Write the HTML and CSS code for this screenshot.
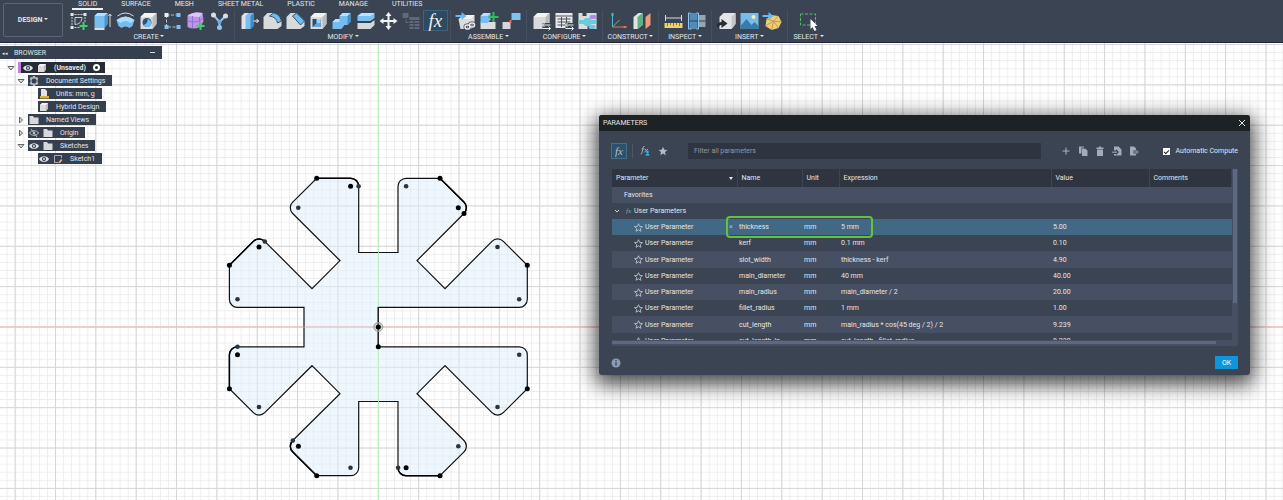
FILE: index.html
```html
<!DOCTYPE html>
<html lang="en">
<head>
<meta charset="utf-8">
<title>Design workspace</title>
<link rel="stylesheet" href="styles.css">
</head>
<body>
<svg class="defs" aria-hidden="true">
  <symbol id="cube" viewBox="0 0 20 20"><path d="M2 6 6 2h12v11l-4 5H2z" fill="#d9dadb"/><path d="M2 6 6 2h12l-4 4z" fill="#f4f4f4"/><path d="M14 6l4-4v11l-4 5z" fill="#b9bbbd"/></symbol>
  <symbol id="eye" viewBox="0 0 10 8"><path d="M0 4C2 .2 8 .2 10 4 8 7.8 2 7.8 0 4z" fill="#dfe3e8"/><circle cx="5" cy="4" r="2.100" fill="#343d4b"/><circle cx="5" cy="4" r="1" fill="#dfe3e8"/></symbol>
  <symbol id="folder" viewBox="0 0 10 8"><path d="M.5 0H4l1 1.500h4.500V8h-9z" fill="#d5d9dd"/></symbol>
  <symbol id="down" viewBox="0 0 8 8"><path d="M1 2.500h6L4 6z" fill="#ddd" stroke="#666" stroke-width="1"/></symbol>
  <symbol id="right" viewBox="0 0 8 8"><path d="M2.500 1l3 3-3 3z" fill="#ddd" stroke="#666" stroke-width="1"/></symbol>
  <symbol id="star" viewBox="0 0 10 10"><path d="M5 .8l1.250 2.900 3.150.3-2.400 2.100.7 3.100L5 7.600 2.300 9.200 3 6.100.6 4l3.150-.3z"/></symbol>
</svg>

<header class="toolbar">
  <button class="workspace" type="button">DESIGN <span class="caret"></span></button>
  <div class="ribbon">
    <nav class="tabs">
      <button class="tab active" type="button">SOLID</button>
      <button class="tab" type="button">SURFACE</button>
      <button class="tab" type="button">MESH</button>
      <button class="tab" type="button">SHEET METAL</button>
      <button class="tab" type="button">PLASTIC</button>
      <button class="tab" type="button">MANAGE</button>
      <button class="tab" type="button">UTILITIES</button>
    </nav>
    <div class="groups">
      <section class="group create">
        <div class="tools">
          <button class="tool" type="button" aria-label="Create sketch"><svg viewBox="0 0 20 20"><g fill="none" stroke="#c9cdd2"><path d="M3 3.500h14M3.500 3v14M3 16.500h8M16.500 3v9" stroke-dasharray="2 1"/><path d="M6.500 13.500v-7h7c0 4-3 7-7 7z"/></g><path d="M2 2h3v3H2zM15 2h3v3h-3zM2 15h3v3H2z" fill="#e3e5e7"/><path d="M14 11h2v3h3v2h-3v3h-2v-3h-3v-2h3z" fill="#44cc6e"/></svg></button>
          <button class="tool" type="button" aria-label="Extrude"><svg viewBox="0 0 20 20"><path d="M2 5l3-3h10v11l-3 4H2z" fill="#79bef0"/><path d="M2 5l3-3h10l-3 3z" fill="#b5dffc"/><path d="M12 5l3-3v11l-3 4z" fill="#4795cf"/><path d="M2 17h10v2H2z" fill="#ddd"/><path d="M17.500 4v12M16 5l1.500-2L19 5" stroke="#ddd" fill="none"/></svg></button>
          <button class="tool" type="button" aria-label="Revolve"><svg viewBox="0 0 20 20"><path d="M1 9q9-7 18 0l-2 6-3 2q-4-3-8 0l-3-2z" fill="#74bbef"/><path d="M1 9q9-7 18 0l-4 3q-5-4-10 0z" fill="#b0dcfb"/><path d="M2 5q8-6 16 0" fill="none" stroke="#ddd"/></svg></button>
          <button class="tool" type="button" aria-label="Hole"><svg viewBox="0 0 20 20"><use href="#cube"/><circle cx="8.500" cy="11.500" r="4.500" fill="#2e5474"/><path d="M5 14a4.500 4.500 0 008-1 4.500 4.500 0 00-4-5 5 5 0 01-4 6z" fill="#72baf0"/></svg></button>
          <button class="tool" type="button" aria-label="Rectangular pattern"><svg viewBox="0 0 20 20"><path d="M4 4h12M4 4v12h12" fill="none" stroke="#b9bec5" stroke-dasharray="3 1.500"/><path d="M2 2h4v4H2z" fill="#eee"/><path d="M14 2h4v4h-4zM2 14h4v4H2zM14 14h4v4h-4z" fill="#7cc2f4"/></svg></button>
          <button class="tool" type="button" aria-label="Create form"><svg viewBox="0 0 20 20"><path d="M2 5q5-5 15-3l1 8-3 6q-7 3-13 0z" fill="#bd94ea"/><path d="M2 5q5-5 15-3l-3 4z" fill="#dfc6f8"/><path d="M7 5v12M2 10q7 2 12 0l4-3M14 6v10" fill="none" stroke="#976fce"/><path d="M14 11h2v3h3v2h-3v3h-2v-3h-3v-2h3z" fill="#44cc6e"/></svg></button>
          <button class="tool" type="button" aria-label="Derive"><svg viewBox="0 0 20 20"><path d="M4 4l6 7 6-6M10 11v5" fill="none" stroke="#8bc9f5" stroke-width="2"/><circle cx="4" cy="4" r="2.500" fill="#ddd"/><circle cx="16" cy="5" r="2.500" fill="#ddd"/><circle cx="10" cy="11" r="2" fill="#6aaee0"/><circle cx="10" cy="16.500" r="2.500" fill="#8bc9f5"/></svg></button>
        </div>
        <button class="group-label" type="button">CREATE <span class="caret"></span></button>
      </section>
      <section class="group modify">
        <div class="tools">
          <button class="tool" type="button" aria-label="Press pull"><svg viewBox="0 0 20 20"><path d="M2 5l3-3h4v13l-3 3H2z" fill="#e1e2e3"/><path d="M6 5l3-3h5v13l-3 3H6z" fill="#77bff2"/><path d="M11 5l3-3v13l-3 3z" fill="#408ac3"/><path d="M14 10h5M17 8l2 2-2 2" stroke="#fff" fill="none"/></svg></button>
          <button class="tool" type="button" aria-label="Fillet"><svg viewBox="0 0 20 20"><path d="M1 6l4-4h6q6 1 8 8v5l-4 3H1z" fill="#d9dadb"/><path d="M7 5l4-3q6 1 8 8l-4 2q-1-6-8-7z" fill="#74bcef" stroke="#34536d"/></svg></button>
          <button class="tool" type="button" aria-label="Chamfer"><svg viewBox="0 0 20 20"><path d="M1 6l4-4h6l8 8v5l-4 3H1z" fill="#d9dadb"/><path d="M7 5l4-3 8 8-4 4z" fill="#74bcef" stroke="#34536d"/></svg></button>
          <button class="tool" type="button" aria-label="Shell"><svg viewBox="0 0 20 20"><use href="#cube"/><path d="M4 8h8v8H4z" fill="#294e70"/><path d="M8 8h4v4H8z" fill="#9bd2fa"/><path d="M4 16l4-4h4v4z" fill="#5da8de"/></svg></button>
          <button class="tool" type="button" aria-label="Combine"><svg viewBox="0 0 20 20"><path d="M8 5l3-3h8v9l-3 3h-3l-3 4H1v-7l3-3h4z" fill="#74bcef"/><path d="M8 5l3-3h8l-3 3zM1 11l3-3h4v3z" fill="#b7e0fc"/><path d="M16 5l3-3v9l-3 3z" fill="#438fc9"/></svg></button>
          <button class="tool" type="button" aria-label="Offset face"><svg viewBox="0 0 20 20"><path d="M2 5l4-3h13v5l-4 3H2z" fill="#78c0f4"/><path d="M2 5l4-3h13l-4 3z" fill="#bae1fd"/><path d="M2 12h13l4-3v5l-4 4H2z" fill="#d5d7d9"/><path d="M1 11h14l4-3" fill="none" stroke="#25425b"/></svg></button>
          <button class="tool" type="button" aria-label="Move"><svg viewBox="0 0 20 20"><path d="M10 1l3 4h-2v4h4V7l4 3-4 3v-2h-4v4h2l-3 4-3-4h2v-4H5v2l-4-3 4-3v2h4V5H7z" fill="#f2f3f4"/></svg></button>
          <button class="tool" type="button" aria-label="Align" disabled><svg viewBox="0 0 20 20"><path d="M1 2h6v5H1zM8 6h10v3H8zM8 10h4v2H8zM13 10h5v2h-5zM8 13h4v2H8zM13 13h5v2h-5zM8 16h4v2H8zM13 16h5v2h-5zM4 8h1v3h2v1H4z" fill="#5f6979"/></svg></button>
          <button class="tool selected" type="button" aria-label="Change parameters"><i class="fx">fx</i></button>
        </div>
        <button class="group-label" type="button">MODIFY <span class="caret"></span></button>
      </section>
      <section class="group triple">
        <div class="tools">
          <button class="tool" type="button" aria-label="Insert component"><svg viewBox="0 0 20 20"><path d="M3 8l5-4h11v10l-3 4H5z" fill="#dcddde"/><path d="M5 8l3-4h11l-4 4z" fill="#f4f4f4"/><path d="M0 4h6V1l5 4-5 4V6H0z" fill="#67b9f4"/><g fill="none" stroke="#3b4453" stroke-width="3"><rect x="9.500" y="14" width="5" height="4" rx="2"/><rect x="14" y="12" width="5" height="4" rx="2"/></g><g fill="none" stroke="#f0f0f0" stroke-width="1.500"><rect x="9.500" y="14" width="5" height="4" rx="2"/><rect x="14" y="12" width="5" height="4" rx="2"/></g></svg></button>
          <button class="tool" type="button" aria-label="New component"><svg viewBox="0 0 20 20"><path d="M2 11h7v7H2zM9 11h8v7H9z" fill="#dbdcdd"/><path d="M2 5l3-3h7v7l-3 3H2z" fill="#77bff3"/><path d="M2 5l3-3h7L9 5z" fill="#b7e0fc"/><path d="M14 1h2v4h4v2h-4v4h-2V7h-4V5h4z" fill="#31bd5b"/></svg></button>
          <button class="tool" type="button" aria-label="Joint"><svg viewBox="0 0 20 20"><path d="M10 2h9v7h-9z" fill="#7fc3f5"/><path d="M1 11h8v7H1z" fill="#d6d7d8"/><path d="M10 10H9v2" stroke="#e37053" stroke-width="2"/></svg></button>
        </div>
        <button class="group-label" type="button">ASSEMBLE <span class="caret"></span></button>
      </section>
      <section class="group triple">
        <div class="tools">
          <button class="tool" type="button" aria-label="Create configuration"><svg viewBox="0 0 20 20"><use href="#cube"/><path d="M11 12h9v8h-9z" fill="#3b4453"/><path d="M11 14h8M11 17.500h8M13 12l-2 2 2 2M17 15.500l2 2-2 2" fill="none" stroke="#eceef0"/></svg></button>
          <button class="tool" type="button" aria-label="Configuration table"><svg viewBox="0 0 20 20"><path d="M1 2h17v15H1z" fill="#e8e9ea"/><path d="M1 5h17M3 8h13M3 11h13M3 14h9M7 6v10M12 6v10" stroke="#4e555d"/><path d="M11 12h9v8h-9z" fill="#3b4453"/><path d="M11 14h8M11 17.500h8M13 12l-2 2 2 2M17 15.500l2 2-2 2" fill="none" stroke="#eceef0"/></svg></button>
          <button class="tool" type="button" aria-label="Theme table"><svg viewBox="0 0 20 20"><path d="M1 2h4v3h4V2h10v16h-4v-3h-5v3H1z" fill="#dadde0"/><path d="M1 9h5c2-3 7-3 8 0h5v4h-5c-2 3-6 3-8 0H1z" fill="#66cdda"/><rect x="12" y="4" width="7" height="4" rx="2" fill="#ae8be0"/><rect x="11" y="14" width="7" height="4" rx="2" fill="#79bef0"/></svg></button>
        </div>
        <button class="group-label" type="button">CONFIGURE <span class="caret"></span></button>
      </section>
      <section class="group double">
        <div class="tools">
          <button class="tool" type="button" aria-label="Construct axis"><svg viewBox="0 0 20 20"><path d="M4 3v13" stroke="#55b6d3"/><path d="M4 16h13" stroke="#e17161"/><path d="M4 16l7-7" stroke="#57c676"/><path d="M3 2h2v3H3z" fill="#55b6d3"/><path d="M15 15h3v2h-3z" fill="#e17161"/></svg></button>
          <button class="tool" type="button" aria-label="Offset plane"><svg viewBox="0 0 20 20"><path d="M1 6l5-4h4v12l-5 4H1z" fill="#e2e3e3"/><path d="M5 6l5-4v12l-5 4z" fill="#55b77e"/><path d="M13 6l5-4v12l-5 4z" fill="#f19b75"/></svg></button>
        </div>
        <button class="group-label" type="button">CONSTRUCT <span class="caret"></span></button>
      </section>
      <section class="group double narrow">
        <div class="tools">
          <button class="tool" type="button" aria-label="Measure"><svg viewBox="0 0 20 20"><path d="M2 4v6M18 4v6M2 7h16" stroke="#d7dade"/><path d="M1 12h18v5H1z" fill="#efcf68"/><path d="M4 12v3M7 12v2M10 12v3M13 12v2M16 12v3" stroke="#8b7a45"/></svg></button>
          <button class="tool" type="button" aria-label="Interference"><svg viewBox="0 0 20 20"><path d="M3 2h8v16H3z" fill="#548bb6"/><path d="M12 4h7v12h-7z" fill="#9ca3ad"/><path d="M3 10h16" stroke="#2d4459"/><path d="M4 2H2v16h3M10 2h2v16h-2" fill="none" stroke="#8cc8ef"/></svg></button>
        </div>
        <button class="group-label" type="button">INSPECT <span class="caret"></span></button>
      </section>
      <section class="group triple">
        <div class="tools">
          <button class="tool" type="button" aria-label="Insert derive"><svg viewBox="0 0 20 20"><path d="M3 6l4-4h12v11l-4 5H3z" fill="#e3e4e5"/><path d="M15 6l4-4v11l-4 5z" fill="#c3c5c7"/><path d="M0 15q1-4 5-4V8l6 4.500-6 4.500v-3q-3 0-3 3z" fill="#2b2e31"/></svg></button>
          <button class="tool" type="button" aria-label="Canvas"><svg viewBox="0 0 20 20"><path d="M1 2h18v16H1z" fill="#79bcea"/><path d="M1 15l6-7 5 6 3-3 4 4v3H1z" fill="#397ba9"/><circle cx="14" cy="6" r="2" fill="#f3efbb"/></svg></button>
          <button class="tool" type="button" aria-label="Insert mesh"><svg viewBox="0 0 20 20"><path d="M4 8l5-4 7 1 3 6-3 6-7 2-6-4z" fill="#edcd78"/><path d="M4 8l7 2 5-5M11 10l-2 9M11 10l8 1M3 15l8-5 5 7" fill="none" stroke="#c49c48"/><path d="M0 4h6V1l5 4-5 4V6H0z" fill="#67b9f4"/></svg></button>
        </div>
        <button class="group-label" type="button">INSERT <span class="caret"></span></button>
      </section>
      <section class="group single">
        <div class="tools">
          <button class="tool" type="button" aria-label="Select"><svg viewBox="0 0 20 20"><path d="M2 3h15v11H2z" fill="none" stroke="#59b77a" stroke-dasharray="3 1.500"/><path d="M12 8l7 7h-3l2 4-2 1-2-4-2 2z" fill="#fff"/></svg></button>
        </div>
        <button class="group-label" type="button">SELECT <span class="caret"></span></button>
      </section>
    </div>
  </div>
</header>

<main class="workspace-area">
  <svg class="sketch" role="img" aria-label="Sketch">
    <defs>
      <pattern id="minor" x="374.300" y="279.900" width="8.070" height="8.070" patternUnits="userSpaceOnUse"><path d="M0 4H8.070M4 0V8.070" stroke="#ededed" stroke-width="1"/></pattern>
      <pattern id="major" x="358.100" y="263.800" width="40.350" height="40.350" patternUnits="userSpaceOnUse"><path d="M0 20.200H40.350M20.200 0V40.350" stroke="#d6d6d6" stroke-width="1"/></pattern>
    </defs>
    <rect width="100%" height="100%" fill="#fff"/>
    <rect width="100%" height="100%" fill="url(#minor)"/>
    <rect width="100%" height="100%" fill="url(#major)"/>
    <g transform="translate(0 -43)">
      <path fill="#def0fc" fill-opacity=".5" stroke="#111" stroke-width="1.200" d="M358.700 252.500V186.300A8 8 0 0 0 350.700 178.300H316.700L292.700 202.100A8 8 0 0 0 292.700 213.500L340 260.600 312 288.600 264.700 241.300A8 8 0 0 0 253.400 241.300L229.400 265.300V299.300A8 8 0 0 0 237.400 307.300H304V346.800H237.400A8 8 0 0 0 229.400 354.800V388.700L253.400 412.700A8 8 0 0 0 264.700 412.700L312 365.700 340 393.700 292.700 440.500A8 8 0 0 0 292.700 451.900L316.700 475.700H350.700A8 8 0 0 0 358.700 467.700V401.500H398V467.700A8 8 0 0 0 406 475.700H440L464 451.900A8 8 0 0 0 464 440.500L417 393.700 445 365.700 492 412.700A8 8 0 0 0 503.300 412.700L527.300 388.700V354.800A8 8 0 0 0 519.300 346.800H378.300V307.300H519.300A8 8 0 0 0 527.300 299.300V265.300L503.300 241.300A8 8 0 0 0 492 241.300L445 288.600 417 260.600 464 213.500A8 8 0 0 0 464 202.100L440 178.300H406A8 8 0 0 0 398 186.300V252.500Z"/>
      <path fill="none" stroke="#000" stroke-width="1.500" d="M316.700 178.300H350.700A8 8 0 0 1 358.700 186.300M440 178.300 464 202.100A8 8 0 0 1 464 213.500M229.400 265.300 253.400 241.300A8 8 0 0 1 264.700 241.300M229.400 388.700V354.800A8 8 0 0 1 237.400 346.800M316.700 475.700 292.700 451.900A8 8 0 0 1 292.700 440.500M440 475.700H406A8 8 0 0 1 398 467.700"/>
      <g fill="#2c3439">
        <circle cx="358.600" cy="186.200" r="2.300"/><circle cx="298.300" cy="207.800" r="2.300"/><circle cx="406.100" cy="186.200" r="2.300"/><circle cx="497.500" cy="247" r="2.300"/><circle cx="519.200" cy="299.300" r="2.300"/><circle cx="237.500" cy="299.300" r="2.300"/><circle cx="264.800" cy="241.500" r="2.300"/><circle cx="237.500" cy="346.800" r="2.300"/><circle cx="519.200" cy="354.800" r="2.300"/><circle cx="259" cy="407" r="2.300"/><circle cx="497.500" cy="407" r="2.300"/><circle cx="292.800" cy="440.600" r="2.300"/><circle cx="458.300" cy="446.200" r="2.300"/><circle cx="350.500" cy="467.800" r="2.300"/><circle cx="398.100" cy="467.800" r="2.300"/>
      </g>
    </g>
    <path d="M378.500 0V2000" stroke="#b4f0b4" stroke-opacity=".8"/>
    <path d="M0 284H4000" stroke="#f6a9a9" stroke-opacity=".8"/>
    <g transform="translate(0 -43)">
      <path d="M378.300 307V347" stroke="#111" stroke-width="1.200"/>
      <circle cx="378.300" cy="327" r="4.500" fill="#aaa" fill-opacity=".45" stroke="#999"/>
      <circle cx="316.700" cy="178.300" r="2.500"/><circle cx="440" cy="178.300" r="2.500"/><circle cx="350.600" cy="186.200" r="2.500"/><circle cx="458.300" cy="207.800" r="2.500"/><circle cx="464" cy="213.500" r="2.500"/><circle cx="259" cy="247" r="2.500"/><circle cx="229.400" cy="265.300" r="2.500"/><circle cx="527.300" cy="265.300" r="2.500"/><circle cx="378.300" cy="327" r="2.500"/><circle cx="378.300" cy="346.800" r="2.500"/><circle cx="237.500" cy="354.800" r="2.500"/><circle cx="229.400" cy="388.700" r="2.500"/><circle cx="527.300" cy="388.700" r="2.500"/><circle cx="298.400" cy="446.200" r="2.500"/><circle cx="406.100" cy="467.800" r="2.500"/><circle cx="316.700" cy="475.800" r="2.500"/><circle cx="440" cy="475.800" r="2.500"/>
    </g>
  </svg>

  <aside class="browser">
    <div class="browser-head"><span class="collapse">◂◂</span><span class="browser-title">BROWSER</span><span class="minimize"></span></div>
    <ul class="tree">
      <li class="root"><svg class="twist"><use href="#down"/></svg><div class="node"><svg class="ico"><use href="#eye"/></svg><svg class="ico big"><use href="#cube"/></svg><span>(Unsaved)</span><span class="radio"></span></div></li>
      <li class="l1"><svg class="twist"><use href="#down"/></svg><div class="node"><svg class="ico big" viewBox="0 0 10 10"><path d="M4 0h2l.4 1.500L8 1l1.300 1.700L8.500 4v2l.8 1.300L8 9l-1.600-.5L6 10H4l-.4-1.500L2 9 .7 7.300 1.500 6V4L.7 2.700 2 1l1.600.5z" fill="#b3bac3"/><circle cx="5" cy="5" r="2.500" fill="#363f4e"/></svg><span>Document Settings</span></div></li>
      <li class="l2"><div class="node"><svg class="ico big" viewBox="0 0 10 10"><path d="M2 0h4l2 2v5H2z" fill="#e2e4e6"/><path d="M1 7h9v2.500H1z" fill="#e1ad3b"/></svg><span>Units: mm, g</span></div></li>
      <li class="l2"><div class="node"><svg class="ico big"><use href="#cube"/></svg><span>Hybrid Design</span></div></li>
      <li class="l1"><svg class="twist"><use href="#right"/></svg><div class="node"><svg class="ico"><use href="#folder"/></svg><span>Named Views</span></div></li>
      <li class="l1"><svg class="twist"><use href="#right"/></svg><div class="node"><svg class="ico" viewBox="0 0 10 8"><path d="M.5 4C2 1 8 1 9.500 4 8 7 2 7 .5 4z" fill="none" stroke="#b9bfc7"/><circle cx="5" cy="4" r="1.300" fill="#b9bfc7"/><path d="M2 0l6 8" stroke="#b9bfc7"/></svg><svg class="ico"><use href="#folder"/></svg><span>Origin</span></div></li>
      <li class="l1"><svg class="twist"><use href="#down"/></svg><div class="node"><svg class="ico"><use href="#eye"/></svg><svg class="ico"><use href="#folder"/></svg><span>Sketches</span></div></li>
      <li class="l2"><div class="node"><svg class="ico"><use href="#eye"/></svg><svg class="ico big" viewBox="0 0 10 10"><path d="M1.500 9V1.500H9M1.500 8.500H5M8.500 2v2" fill="none" stroke="#9faab6"/><path d="M5 9l3-4 1.500 1L7 9z" fill="#e6b489"/></svg><span>Sketch1</span></div></li>
    </ul>
  </aside>

  <section class="dialog" role="dialog" aria-labelledby="dlg-title">
    <header class="dialog-title"><span id="dlg-title">PARAMETERS</span>
      <button class="close" type="button" aria-label="Close"><svg viewBox="0 0 8 8"><path d="M1 1l6 6M7 1L1 7" stroke="#e6e8ea" stroke-width="1"/></svg></button>
    </header>
    <div class="dialog-tools">
      <button class="mini fx-button" type="button" aria-label="All parameters"><i class="fx">fx</i></button>
      <span class="divider"></span>
      <button class="mini" type="button" aria-label="User parameters"><svg viewBox="0 0 10 10"><path d="M5 0Q3.200 0 3 2L2 7Q1.600 8 .5 8M1.500 3h3M5 3l3 3M8 3L4.500 6" fill="none" stroke="#a9b3c0" stroke-width=".9"/><circle cx="7.500" cy="6" r="1.300" fill="#42b2ea"/><path d="M5.500 9.500q0-2 2-2t2 2z" fill="#42b2ea"/></svg></button>
      <button class="mini solid" type="button" aria-label="Favorites"><svg><use href="#star"/></svg></button>
      <input class="filter" type="text" placeholder="Filter all parameters" aria-label="Filter all parameters">
      <div class="actions">
        <button class="mini" type="button" aria-label="Add"><svg viewBox="0 0 10 10"><path d="M5 1.500v7M1.500 5h7" stroke="#aab3be"/></svg></button>
        <button class="mini" type="button" aria-label="Copy"><svg viewBox="0 0 10 10"><path d="M1 .5h5v1H3.500v6H1z" fill="#a2abb7"/><path d="M4 2.500h3l2.500 2V10H4z" fill="#a2abb7"/></svg></button>
        <button class="mini" type="button" aria-label="Delete"><svg viewBox="0 0 10 10"><path d="M1.500 1.500H4V.5h2v1h2.500V3h-7zM2 3.500h6V10H2z" fill="#a2abb7"/></svg></button>
        <button class="mini" type="button" aria-label="Import"><svg viewBox="0 0 10 10"><path d="M2 .5h4.500l3 3V9.500H2V8h2v1L7 6 4 3v1.500H2z" fill="#a2abb7"/><path d="M0 6.200h5" stroke="#a2abb7"/></svg></button>
        <button class="mini" type="button" aria-label="Export"><svg viewBox="0 0 10 10"><path d="M1 .5h4l2 2v2H4.500v3H7v2H1z" fill="#a2abb7"/><path d="M5 6h4M7.500 4.500L9.200 6 7.500 7.500" fill="none" stroke="#a2abb7"/></svg></button>
      </div>
      <label class="auto"><input type="checkbox" checked>Automatic Compute</label>
    </div>

    <div class="grid-frame">
      <div class="grid-view">
        <table class="params">
          <colgroup><col class="c-param"><col class="c-name"><col class="c-unit"><col class="c-expr"><col class="c-value"><col></colgroup>
          <thead><tr><th class="sorted">Parameter</th><th>Name</th><th>Unit</th><th>Expression</th><th>Value</th><th>Comments</th></tr></thead>
          <tbody>
            <tr class="fav"><td colspan="6">Favorites</td></tr>
            <tr class="section"><td colspan="6"><div class="section-name"><svg class="chev" viewBox="0 0 6 6"><path d="M1 2l2 2 2-2" fill="none" stroke="#ccd2d9"/></svg><i class="fx">fx</i>User Parameters</div></td></tr>
            <tr class="current"><td><div class="user"><svg><use href="#star"/></svg>User Parameter</div></td><td><div class="marked">thickness<span class="highlight">×</span></div></td><td>mm</td><td>5 mm</td><td>5.00</td><td></td></tr>
            <tr><td><div class="user"><svg><use href="#star"/></svg>User Parameter</div></td><td>kerf</td><td>mm</td><td>0.1 mm</td><td>0.10</td><td></td></tr>
            <tr><td><div class="user"><svg><use href="#star"/></svg>User Parameter</div></td><td>slot_width</td><td>mm</td><td>thickness - kerf</td><td>4.90</td><td></td></tr>
            <tr><td><div class="user"><svg><use href="#star"/></svg>User Parameter</div></td><td>main_diameter</td><td>mm</td><td>40 mm</td><td>40.00</td><td></td></tr>
            <tr><td><div class="user"><svg><use href="#star"/></svg>User Parameter</div></td><td>main_radius</td><td>mm</td><td>main_diameter / 2</td><td>20.00</td><td></td></tr>
            <tr><td><div class="user"><svg><use href="#star"/></svg>User Parameter</div></td><td>fillet_radius</td><td>mm</td><td>1 mm</td><td>1.00</td><td></td></tr>
            <tr><td><div class="user"><svg><use href="#star"/></svg>User Parameter</div></td><td>cut_length</td><td>mm</td><td>main_radius * cos(45 deg / 2) / 2</td><td>9.239</td><td></td></tr>
            <tr><td><div class="user"><svg><use href="#star"/></svg>User Parameter</div></td><td>cut_length_in</td><td>mm</td><td>cut_length - fillet_radius</td><td>8.239</td><td></td></tr>
          </tbody>
        </table>
      </div>
      <div class="v-track"><div class="v-thumb"></div></div>
      <div class="h-track"><div class="h-thumb"></div></div>
    </div>

    <footer class="dialog-foot">
      <button class="info" type="button" aria-label="Information"><svg viewBox="0 0 10 10"><circle cx="5" cy="5" r="4.500" fill="#8b9cb3"/><path d="M5 2v1.300M5 4.300v3.500" stroke="#3b4453" stroke-width="1.300"/></svg></button>
      <button class="ok" type="button">OK</button>
    </footer>
  </section>
</main>
</body>
</html>
```
FILE: styles.css
```css
* { box-sizing: border-box; }
body {
  margin: 0;
  height: 100vh;
  display: flex;
  flex-direction: column;
  overflow: hidden;
  font: 7px/10px Roboto, "Noto Sans", sans-serif;
  color: #e3e7eb;
}
button {
  margin: 0;
  padding: 0;
  border: 0;
  background: none;
  color: inherit;
  font: inherit;
}
.defs { position: absolute; width: 0; height: 0; }
.caret {
  display: inline-block;
  border: 2px solid transparent;
  border-top-color: currentColor;
  border-bottom: 0;
  vertical-align: 2px;
}
.fx { font-family: "Liberation Serif", serif; font-style: italic; }

/* toolbar */
.toolbar {
  display: flex;
  flex: none;
  background: #3b4453;
  border-bottom: 1px solid #25253a;
}
.workspace {
  width: 60px;
  height: 34px;
  margin: 3px 4px 5px 3px;
  border: 1px solid #5a6577;
  border-radius: 2px;
  font-weight: 700;
}
.ribbon { flex: 1; }
.tabs {
  display: flex;
  gap: 24px;
  height: 10px;
  padding-left: 11px;
}
.tab { line-height: 8px; height: 10px; padding-bottom: 2px; }
.tab.active {
  margin: 0 -6px;
  padding: 0 6px;
  border-bottom: 2px solid #f0f1f2;
}
.groups { display: flex; }
.group {
  padding: 0 3px;
  display: flex;
  flex-direction: column;
  align-items: center;
}
.group + .group { border-left: 1px solid #465060; }
.create { width: 167px; padding: 0 3px 0 0; }
.modify { width: 216px; padding: 0 2px 0 3px; }
.triple { width: 76px; }
.double { width: 56px; }
.double.narrow { width: 53px; }
.single { width: 42px; }
.tools { display: flex; align-self: stretch; height: 21px; }
.tool {
  flex: 1 1 0;
  min-width: 0;
  display: flex;
  align-items: center;
  justify-content: center;
}
.tool svg { flex: none; width: 21px; height: 20px; }
.tool.selected { background: #2d4a61; border: 1px solid #3d6380; }
.tool .fx { font-size: 19px; line-height: 18px; color: #eef2f5; }
.group-label { height: 11px; line-height: 12px; white-space: nowrap; }

/* canvas */
.workspace-area { position: relative; flex: 1; overflow: hidden; }
.sketch { position: absolute; inset: 0; width: 100%; height: 100%; }

/* browser tree */
.browser { position: relative; width: 162px; padding-top: 3px; }
.browser-head {
  display: flex;
  align-items: center;
  height: 13px;
  padding: 0 7px 0 2px;
  background: #363f4e;
}
.collapse { width: 12px; font-size: 5px; }
.browser-title { flex: 1; }
.minimize { width: 5px; height: 1px; background: #d9dde2; }
.tree {
  list-style: none;
  margin: 0;
  padding: 2px 0 0;
}
.tree li { display: flex; align-items: center; height: 13px; }
.twist { width: 8px; height: 8px; margin-right: 3px; }
.root { padding-left: 7px; }
.l1 { padding-left: 17px; }
.l2 { padding-left: 38px; }
.node {
  display: flex;
  align-items: center;
  gap: 4px;
  height: 11px;
  padding: 0 7px 0 1px;
  background: #363f4e;
  white-space: nowrap;
}
.node span { margin-left: 3px; }
.ico { width: 10px; height: 8px; }
.ico.big { height: 10px; }
.root .node {
  padding: 0 5px 0 2px;
  border-left: 3px solid #c47fd6;
  background: #262c36;
  font-weight: 700;
}
.root .node .radio {
  width: 7px;
  height: 7px;
  border: 2px solid #fff;
  border-radius: 50%;
}

/* parameters window */
.dialog {
  position: absolute;
  left: 599px;
  right: 33px;
  top: 72px;
  background: #3b4453;
  border-radius: 3px;
  box-shadow: 0 6px 20px 4px rgba(0, 0, 0, .7);
}
.dialog-title {
  display: flex;
  align-items: center;
  justify-content: space-between;
  height: 16px;
  padding: 0 4px;
  border-radius: 3px 3px 0 0;
  background: #1d2224;
}
.close { width: 8px; height: 8px; display: flex; }
.dialog-tools {
  display: flex;
  align-items: center;
  padding: 12px 12px 10px;
}
.mini {
  width: 18px;
  height: 16px;
  display: flex;
  align-items: center;
  justify-content: center;
}
.mini svg { width: 10px; height: 10px; }
.mini.solid svg { fill: #b4bcc7; }
.fx-button { width: 16px; background: #2f506a; border: 1px solid #43708f; }
.fx-button .fx { font-size: 11px; line-height: 12px; color: #b5c3d0; }
.divider { width: 1px; height: 14px; margin: 0 3px 0 5px; background: #4c5666; }
.filter {
  flex: 1;
  min-width: 0;
  height: 16px;
  margin: 0 17px 0 16px;
  padding: 0 6px;
  border: 0;
  background: #2e3541;
  color: inherit;
  font: inherit;
}
.filter::placeholder { color: #9199a4; }
.actions { display: flex; margin-right: 20px; }
.actions .mini { width: 17px; }
.auto { display: flex; align-items: center; gap: 6px; white-space: nowrap; }
.auto input {
  appearance: none;
  width: 7px;
  height: 7px;
  margin: 0;
  background: #fff;
}
.auto input:checked::before {
  content: "";
  display: block;
  width: 4px;
  height: 2px;
  margin: 2px 1px;
  border: solid #222;
  border-width: 0 0 1px 1px;
  transform: rotate(-45deg);
}
.grid-frame {
  display: grid;
  grid-template-columns: 1fr 6px;
  grid-template-rows: 171px 6px;
  margin: 0 12px 0 13px;
  background: #465062;
}
.grid-view { overflow: hidden; }
.params {
  width: 100%;
  table-layout: fixed;
  border-collapse: collapse;
  background: #3b4453;
}
.c-param { width: 125px; }
.c-name { width: 65px; }
.c-unit { width: 37px; }
.c-expr { width: 212px; }
.c-value { width: 98px; }
.params th {
  position: relative;
  height: 18px;
  padding: 0 4px;
  background: #2e3541;
  border-right: 1px solid #3c4554;
  font-weight: 400;
  text-align: left;
}
.sorted::after {
  content: "";
  position: absolute;
  right: 4px;
  top: 8px;
  border: 2px solid transparent;
  border-top: 3px solid #e3e6ea;
  border-bottom: 0;
}
.params td { height: 16px; padding: 0 2px; white-space: nowrap; }
.params tr:nth-child(odd) { background: #465062; }
.params tr:nth-child(4n + 5) td { height: 17px; }
.params .fav td { padding-left: 12px; }
.params tr.current:nth-child(odd) { background: #416986; }
.user { display: flex; align-items: center; gap: 2px; padding-left: 20px; }
.user svg { width: 9px; height: 9px; fill: none; stroke: #b9c2cd; }
.section-name { display: flex; align-items: center; }
.chev { width: 6px; height: 6px; margin-right: 6px; }
.section-name .fx { width: 8px; color: #97a2b0; }
.marked { position: relative; }
.highlight {
  position: absolute;
  left: -13px;
  top: -6px;
  width: 147px;
  height: 22px;
  padding: 4px 1px;
  border: 2px solid #63c13f;
  border-radius: 4px;
  color: #a9bccb;
}
.v-track { padding: 0 1px; }
.v-thumb { height: 134px; background: #5c6980; }
.h-track { grid-column: 1 / -1; padding: 1px 22px 2px 0; }
.h-thumb { height: 3px; background: #5c6980; }
.dialog-foot {
  display: flex;
  align-items: center;
  justify-content: space-between;
  padding: 10px 12px 6px;
}
.info { width: 10px; height: 10px; display: flex; }
.ok {
  width: 23px;
  height: 13px;
  background: #0d96db;
  color: #fff;
}
```
